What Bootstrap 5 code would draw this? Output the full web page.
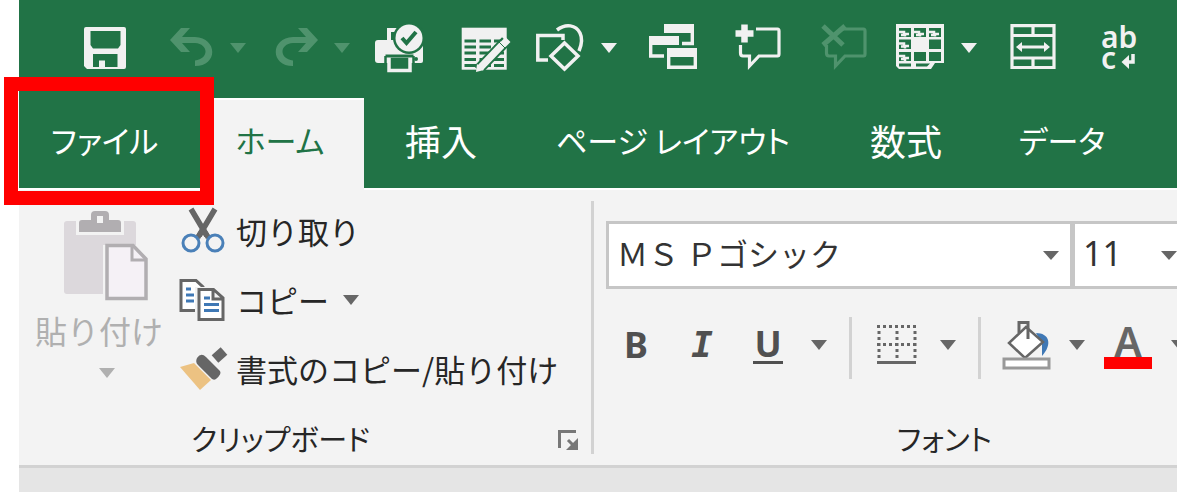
<!DOCTYPE html>
<html lang="ja">
<head>
<meta charset="utf-8">
<meta name="viewport" content="width=device-width, initial-scale=1">
<title>リボン</title>
<link href="https://cdn.jsdelivr.net/npm/bootstrap@5.3.0/dist/css/bootstrap.min.css" rel="stylesheet">
<style>
:root { --xl-green:#217346; --xl-face:#f3f3f3; --xl-line:#d2d2d2; --xl-ink:#262626; --xl-gray:#666; }
body { font-family:"Noto Sans CJK JP",sans-serif; font-feature-settings:"palt"; color:var(--xl-ink); background:#fff; overflow-x:hidden; }
button { border:0; background:none; padding:0; color:inherit; }
svg { display:block; flex:none; overflow:visible; }
.app-window { margin:0 3px 0 19px; min-height:100vh; background:#e5e5e5; }
.quick-bar { background:var(--xl-green); color:#f1f1f1; padding:24px 0 26px 43px; overflow:hidden; }
.quick-btn { padding:0 19px; flex:none; }
.quick-split { padding-left:20px; padding-right:6px; gap:14px; flex:none; }
.quick-split.wide { padding-left:8px; padding-right:13px; gap:17px; }
.faded { color:#4f936d; }
.tab-bar { background:var(--xl-green); height:90px; font-size:31px; line-height:84px; }
.tab-bar a { color:#fff; text-decoration:none; white-space:nowrap; display:block; text-align:center; }
.tab-file { width:181px; padding-right:10px; }
.tab-home { width:164px; padding-right:4px; margin-bottom:-2px; background:var(--xl-face); border-top:2px solid #fff; line-height:80px; }
.tab-bar .tab-home { color:var(--xl-green); position:relative; }
.tab-short { width:154px; }
.tab-long { width:310px; }
.tab-mid { width:156px; }
.tab-kanji { font-size:36px; }
.callout-frame { position:absolute; left:-15px; top:-21px; width:210px; height:128px; border:14px solid #f00; z-index:3; pointer-events:none; }
.ribbon-body { background:var(--xl-face); border-top:2px solid #fff; border-bottom:3px solid var(--xl-line); padding:11px 0; overflow:hidden; }
.clip-group { width:572px; flex:none; }
.clip-row { margin-top:-5px; }
.paste-col { width:160px; color:#b0b0b0; }
.paste-btn { width:160px; font-size:32px; line-height:44px; padding-top:14px; }
.paste-btn .clipboard-art { margin-left:13px; }
.cmd-row { height:69px; font-size:31px; line-height:44px; gap:9px; }
.group-name { font-size:29px; line-height:32px; height:32px; margin-top:19px; }
.v-line { width:3px; background:var(--xl-line); flex:none; }
.font-group { flex:0 0 692px; padding-left:9px; }
.combo-row { margin:20px 0 0 3px; }
.combo { appearance:none; height:68px; border:3px solid #c6c6c6; border-radius:0; color:#333; padding:0 8px 4px; background:#fff url("data:image/svg+xml,%3Csvg xmlns='http://www.w3.org/2000/svg' width='16' height='9'%3E%3Cpath d='M0 0h16l-8 9z' fill='%23666'/%3E%3C/svg%3E") no-repeat right 11px center; }
.combo-name { width:467px; font-size:31px; }
.combo-size { width:120px; margin-left:-1px; font-size:34px; font-family:"Noto Sans",sans-serif; background-position:86px center; }
.tool-row { height:62px; margin-top:28px; color:#505050; }
.tool { width:66px; height:56px; flex:none; font:700 36px/56px "Noto Sans",sans-serif; display:flex; align-items:center; justify-content:center; }
.tool-i { font:italic 700 36px/56px "DejaVu Sans Mono",monospace; }
.tool-drop { width:36px; height:56px; flex:none; display:flex; align-items:center; justify-content:center; color:var(--xl-gray); }
.tool-row .v-line { margin:0 12px; }
.underlined { border-bottom:3px solid; line-height:34px; padding:0 1px; }
.font-name { margin-top:43px; }
</style>
</head>
<body>
<svg width="0" height="0" class="position-absolute" aria-hidden="true">
  <symbol id="caret" viewBox="0 0 16 10"><path d="M0 0h16L8 10z" fill="currentColor"/></symbol>
  <symbol id="undo" viewBox="0 0 48 48"><path fill="currentColor" d="M13 4H22L14 13H27C50 14 50 42 27 42V36.500C41 35 41 20 27 19H14L22 28H13L2 16Z"/></symbol>
  <symbol id="bubble" viewBox="0 0 48 48"><path d="M21 5H42.500Q44 5 44 7V30Q44 32 42.500 32H24L14.500 42V32H8Q5.500 32 5.500 29V21" fill="none" stroke="currentColor" stroke-width="3.200"/></symbol>
</svg>
<div class="app-window">
  <header>
    <div class="quick-bar d-flex">
      <button class="quick-btn" aria-label="上書き保存"><svg width="48" height="48"><path fill="currentColor" fill-rule="evenodd" d="M5 3H43Q45 3 45 5V43Q45 45 43 45H6L3 42V5Q3 3 5 3ZM9.500 7V21L12 24.500H37L39.500 21V7ZM12 30V43H18V36.500H24V43H36.500V30Z"/></svg></button>
      <button class="quick-split faded d-flex align-items-center" aria-label="元に戻す"><svg width="48" height="48"><use href="#undo"/></svg><svg width="16" height="10"><use href="#caret"/></svg></button>
      <button class="quick-split faded d-flex align-items-center" aria-label="やり直し"><svg width="48" height="48"><use href="#undo" transform="matrix(-1 0 0 1 48 0)"/></svg><svg width="16" height="10"><use href="#caret"/></svg></button>
      <button class="quick-btn" aria-label="印刷プレビュー"><svg width="48" height="48"><path fill="none" stroke="currentColor" stroke-width="4" d="M22 6H14V18"/><path fill="currentColor" d="M3 16H48V37Q48 39 46 39H3Q0 39 0 36V19Q0 16 3 16Z"/><rect x="14" y="32" width="21" height="14.500" fill="#217346" stroke="currentColor" stroke-width="3.500"/><path d="M10.500 32H38.500" stroke="#217346" stroke-width="3"/><path d="M10.500 32V40M38.500 32V40" stroke="#217346" stroke-width="2.500"/><circle cx="41" cy="35" r="2" fill="#217346"/><circle cx="34" cy="14" r="16" fill="#217346"/><circle cx="34" cy="14" r="13.500" fill="currentColor"/><path d="M27 14L31.500 19 41 8" fill="none" stroke="#217346" stroke-width="4"/></svg></button>
      <button class="quick-btn" aria-label="フォーム"><svg width="48" height="48"><rect x=".7" y="3.700" width="45" height="42" fill="currentColor"/><path stroke="#217346" stroke-width="3" d="M3.500 17H15M18.500 17H30M33 17H43M3.500 23H15M18.500 23H30M33 23H43M3.500 29H15M18.500 29H30M33 29H43M3.500 35.500H15M18.500 35.500H30M33 35.500H43M3.500 41.500H15M18.500 41.500H30M33 41.500H43"/><path d="M17 46L45 17" stroke="#217346" stroke-width="11"/><path d="M19 44L42 20M42 15.500L47 20.500" stroke="currentColor" stroke-width="7"/><path d="M15 48L16 40 23 46Z" fill="currentColor"/><path d="M38 18L44 24" stroke="#217346" stroke-width="1"/></svg></button>
      <button class="quick-split wide d-flex align-items-center" aria-label="図形"><svg width="48" height="48"><g fill="none" stroke="currentColor" stroke-width="3.500"><path d="M27 16V11.500H1.800V36H12"/><path d="M21 6C30-1 40 1 44 9C47 15 46 20 43 27"/><path d="M28.500 19L42 32 28.500 45 15 32Z"/></g></svg><svg width="16" height="10"><use href="#caret"/></svg></button>
      <button class="quick-btn" aria-label="ウィンドウの切り替え"><svg width="48" height="48"><g fill="none" stroke="currentColor" stroke-width="3.400"><path d="M15 4.500H45M43.300 4V19.500H33"/><path d="M1.700 15V32H15M18 26H46.300V43.300H19.700V26"/></g><path fill="currentColor" d="M15 0H45V9H15ZM0 12H30V21H0ZM18 24H48V33H18Z"/></svg></button>
      <button class="quick-btn" aria-label="コメントの挿入"><svg width="48" height="48"><use href="#bubble"/><path d="M.5 9.500H18.500M9.500.5V18.500" stroke="currentColor" stroke-width="6.500"/></svg></button>
      <button class="quick-btn faded" aria-label="コメントの削除"><svg width="48" height="48"><use href="#bubble"/><path d="M2 2L22 21M24 2L2 21" stroke="currentColor" stroke-width="5"/></svg></button>
      <button class="quick-split wide d-flex align-items-center" aria-label="ウィンドウ枠の固定"><svg width="48" height="48"><path fill="currentColor" d="M0 0H48V39H39L35 45H3L0 42Z"/><path fill="#217346" d="M3 4H15V13H3ZM18 4H30V13H18ZM33 4H45V13H33ZM3 15.500H15V25H3ZM33 15.500H45V25H33ZM3 28H15V37H3ZM18 28H30V37H18ZM33 28H45V37H33ZM3 39.500H15V42.500H3ZM20 39.500H34L31 42.500H20Z"/><path fill="none" stroke="currentColor" stroke-width="2.500" d="M3 8H8V11H5M9 12.500V10H13M18 8H23V11H20M24 12.500V10H28M33 8H38V11H35M39 12.500V10H43M3 19.500H8V22.500H5M9 24.500V22H13M3 32H8V35H5M9 37V34H13"/></svg><svg width="16" height="10"><use href="#caret"/></svg></button>
      <button class="quick-btn" aria-label="セルの結合"><svg width="48" height="48"><path fill="none" stroke="currentColor" stroke-width="3.200" d="M3 1.700H45V43.500H3ZM3 11.500H45M3 34H45M24 2V11M24 34V43M12 23H36"/><path fill="currentColor" d="M7 23L13 18V28ZM41 23L35 18V28Z"/></svg></button>
      <button class="quick-btn" aria-label="折り返して全体を表示"><svg width="48" height="48"><g fill="currentColor" font-family="Noto Sans,sans-serif" font-weight="600" font-size="30"><text x="6" y="24">ab</text><text x="6" y="45">c</text></g><path d="M38 30V38H31" fill="none" stroke="currentColor" stroke-width="3.500"/><path d="M26.500 38L34 31V45Z" fill="currentColor"/></svg></button>
    </div>
    <nav class="tab-bar d-flex position-relative">
      <a class="tab-file" href="#file">ファイル</a>
      <a class="tab-home" href="#home" aria-current="page">ホーム</a>
      <a class="tab-short tab-kanji" href="#insert">挿入</a>
      <a class="tab-long" href="#layout">ページ レイアウト</a>
      <a class="tab-mid tab-kanji" href="#formulas">数式</a>
      <a class="tab-mid" href="#data">データ</a>
      <span class="callout-frame"></span>
    </nav>
  </header>
  <main class="ribbon-body d-flex">
    <section class="clip-group" aria-label="クリップボード">
      <div class="clip-row d-flex">
        <div class="paste-col">
          <button class="paste-btn d-flex flex-column align-items-center" disabled>
            <svg class="clipboard-art" width="84" height="98"><path fill="#dcd8dc" d="M3 11H69Q72 11 72 14V35H39V84H3Q0 84 0 81V14Q0 11 3 11Z"/><path fill="#f3f3f3" d="M12 7H60V25H12Z"/><path fill="#b1aeb1" fill-rule="evenodd" d="M15 22V13Q15 10 18 10H27V5Q27 1 31 1H41Q45 1 45 5V10H54Q57 10 57 13V22ZM33 6V13H39V6Z"/><path fill="#f5f1f6" stroke="#b1aeb1" stroke-width="3.500" d="M43 35.500H69L82 49V88.500H43Z"/><path fill="none" stroke="#b1aeb1" stroke-width="3" d="M68 36V50H82"/></svg>
            <span>貼り付け</span>
            <svg class="mt-3 ms-3" width="16" height="10"><use href="#caret"/></svg>
          </button>
        </div>
        <div>
          <button class="cmd-row d-flex align-items-center"><svg width="48" height="48"><path d="M12 2L31 34M36 2L17 34" stroke="#666" stroke-width="5.500"/><path fill="#f3f3f3" d="M12 30H36V40H12Z"/><path fill="#666" d="M24 17L32 30 27 32 24 27 21 32 16 30Z"/><g fill="#f3f3f3" stroke="#4a80b8" stroke-width="3"><circle cx="12" cy="36" r="8"/><circle cx="36" cy="36" r="8"/></g></svg>切り取り</button>
          <div class="d-flex align-items-center">
            <button class="cmd-row d-flex align-items-center"><svg width="48" height="48"><g fill="#fff" stroke="#666" stroke-width="3"><path d="M17 34.500H2V4.500H17L24 11V34"/><path fill="#f3f3f3" stroke="none" d="M16 11H27V40H16Z"/><path d="M20 13.500H34.500L44 22V43.500H20ZM34 14V23H44"/></g><path stroke="#3f78b5" stroke-width="3" d="M7 13H12M7 19H15M7 25H15M25 22H31M25 28.500H40M25 34.500H40"/></svg>コピー</button>
            <button class="tool-drop ms-1" aria-label="コピーのオプション"><svg width="16" height="10"><use href="#caret"/></svg></button>
          </div>
          <button class="cmd-row d-flex align-items-center"><svg width="48" height="48"><path fill="#ecc282" d="M1 22L15 18 32 35 21 45Z"/><path fill="#666" d="M18 13Q22 7 27 12L41 26Q43 29 37 34Q34 36 31 32L19 20Q16 17 18 13Z"/><path d="M36 14L45 6" stroke="#666" stroke-width="10"/></svg>書式のコピー/貼り付け</button>
        </div>
      </div>
      <div class="group-name d-flex align-items-center">
        <span class="flex-fill text-center pe-3">クリップボード</span>
        <button class="me-2 pe-1 pt-1" aria-label="クリップボードの詳細"><svg width="21" height="21"><path fill="none" stroke="#777" stroke-width="3" d="M1.500 18V1.500H18M10 10L16 16"/><path fill="#777" d="M20 8V20H8Z"/></svg></button>
      </div>
    </section>
    <div class="v-line"></div>
    <section class="font-group" aria-label="フォント">
      <div class="combo-row d-flex">
        <select class="combo combo-name" aria-label="フォント名"><option>ＭＳ Ｐゴシック</option></select>
        <select class="combo combo-size" aria-label="フォント サイズ"><option>11</option></select>
      </div>
      <div class="tool-row d-flex">
        <button class="tool" aria-label="太字">B</button>
        <button class="tool tool-i" aria-label="斜体">I</button>
        <button class="tool" aria-label="下線"><span class="underlined">U</span></button>
        <button class="tool-drop" aria-label="下線の種類"><svg width="16" height="10"><use href="#caret"/></svg></button>
        <div class="v-line"></div>
        <button class="tool" aria-label="罫線"><svg width="40" height="48"><path fill="none" stroke="#666" stroke-width="3" stroke-dasharray="3 3" d="M0 5.500H39M0 23.500H39M2 10V39M20 10V39M38 10V39"/><path d="M0 41.500H39" stroke="#666" stroke-width="3"/></svg></button>
        <button class="tool-drop" aria-label="罫線の種類"><svg width="16" height="10"><use href="#caret"/></svg></button>
        <div class="v-line"></div>
        <button class="tool" aria-label="塗りつぶしの色"><svg width="48" height="50"><path fill="#3f78b5" d="M34 13C47 13 51 24 40 36V24Z"/><path fill="#fff" stroke="#666" stroke-width="2.500" d="M24 7L41 22 23 38 7 23Z"/><path fill="none" stroke="#666" stroke-width="3" d="M17 13V2.500H26V19"/><path fill="#fff" stroke="#999" stroke-width="3" d="M2 39H47V48H2Z"/></svg></button>
        <button class="tool-drop" aria-label="塗りつぶしの色の選択"><svg width="16" height="10"><use href="#caret"/></svg></button>
        <button class="tool" aria-label="フォントの色"><svg width="48" height="50"><text x="24" y="37" text-anchor="middle" fill="#666" font-family="Noto Sans,sans-serif" font-weight="600" font-size="41">A</text><path fill="#f00" d="M0 37H48V49H0Z"/></svg></button>
        <button class="tool-drop" aria-label="フォントの色の選択"><svg width="16" height="10"><use href="#caret"/></svg></button>
      </div>
      <div class="group-name font-name text-center">フォント</div>
    </section>
  </main>
</div>
<script src="https://cdn.jsdelivr.net/npm/bootstrap@5.3.0/dist/js/bootstrap.bundle.min.js"></script>
</body>
</html>
